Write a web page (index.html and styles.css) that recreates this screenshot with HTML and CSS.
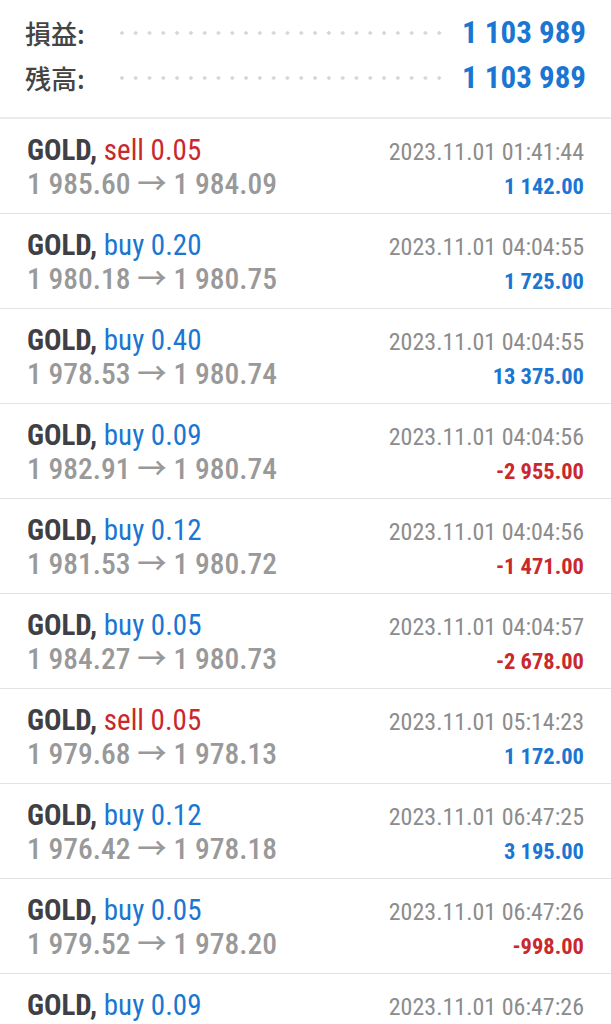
FILE: index.html
```html
<!DOCTYPE html>
<html lang="ja">

<head>
  <meta charset="UTF-8" />
  <meta name="viewport" content="width=device-width, initial-scale=1.0" />
  <title>履歴</title>
  <link rel="stylesheet" href="styles.css">
</head>

<body>
  <div class="summary">
    <div class="summary-row">
      <span class="label">損益:</span>
      <span class="dots"></span>
      <span class="value">1 103 989</span>
    </div>
    <div class="summary-row">
      <span class="label">残高:</span>
      <span class="dots"></span>
      <span class="value">1 103 989</span>
    </div>
  </div>

  <div class="deals">
    <div class="deal">
      <div class="line">
        <span class="title">GOLD, <span class="sell">sell 0.05</span></span>
        <span class="date">2023.11.01 01:41:44</span>
      </div>
      <div class="line second">
        <span class="price">1 985.60 → 1 984.09</span>
        <span class="profit">1 142.00</span>
      </div>
    </div>

    <div class="deal">
      <div class="line">
        <span class="title">GOLD, <span class="buy">buy 0.20</span></span>
        <span class="date">2023.11.01 04:04:55</span>
      </div>
      <div class="line second">
        <span class="price">1 980.18 → 1 980.75</span>
        <span class="profit">1 725.00</span>
      </div>
    </div>

    <div class="deal">
      <div class="line">
        <span class="title">GOLD, <span class="buy">buy 0.40</span></span>
        <span class="date">2023.11.01 04:04:55</span>
      </div>
      <div class="line second">
        <span class="price">1 978.53 → 1 980.74</span>
        <span class="profit">13 375.00</span>
      </div>
    </div>

    <div class="deal">
      <div class="line">
        <span class="title">GOLD, <span class="buy">buy 0.09</span></span>
        <span class="date">2023.11.01 04:04:56</span>
      </div>
      <div class="line second">
        <span class="price">1 982.91 → 1 980.74</span>
        <span class="profit loss">-2 955.00</span>
      </div>
    </div>

    <div class="deal">
      <div class="line">
        <span class="title">GOLD, <span class="buy">buy 0.12</span></span>
        <span class="date">2023.11.01 04:04:56</span>
      </div>
      <div class="line second">
        <span class="price">1 981.53 → 1 980.72</span>
        <span class="profit loss">-1 471.00</span>
      </div>
    </div>

    <div class="deal">
      <div class="line">
        <span class="title">GOLD, <span class="buy">buy 0.05</span></span>
        <span class="date">2023.11.01 04:04:57</span>
      </div>
      <div class="line second">
        <span class="price">1 984.27 → 1 980.73</span>
        <span class="profit loss">-2 678.00</span>
      </div>
    </div>

    <div class="deal">
      <div class="line">
        <span class="title">GOLD, <span class="sell">sell 0.05</span></span>
        <span class="date">2023.11.01 05:14:23</span>
      </div>
      <div class="line second">
        <span class="price">1 979.68 → 1 978.13</span>
        <span class="profit">1 172.00</span>
      </div>
    </div>

    <div class="deal">
      <div class="line">
        <span class="title">GOLD, <span class="buy">buy 0.12</span></span>
        <span class="date">2023.11.01 06:47:25</span>
      </div>
      <div class="line second">
        <span class="price">1 976.42 → 1 978.18</span>
        <span class="profit">3 195.00</span>
      </div>
    </div>

    <div class="deal">
      <div class="line">
        <span class="title">GOLD, <span class="buy">buy 0.05</span></span>
        <span class="date">2023.11.01 06:47:26</span>
      </div>
      <div class="line second">
        <span class="price">1 979.52 → 1 978.20</span>
        <span class="profit loss">-998.00</span>
      </div>
    </div>

    <div class="deal">
      <div class="line">
        <span class="title">GOLD, <span class="buy">buy 0.09</span></span>
        <span class="date">2023.11.01 06:47:26</span>
      </div>
    </div>
  </div>
</body>

</html>
```

FILE: styles.css
```css
body {
  margin: 0;
  background-color: white;
  font-family: Roboto, "Noto Sans CJK JP", sans-serif;
  font-stretch: condensed;
  overflow: hidden;
}

/* top block with totals */
.summary {
  padding: 10px 25px 17px 25px;
  border-bottom: 2px solid #ebebeb;
}

.summary-row {
  display: flex;
  align-items: center;
  height: 45px;
}

.label {
  font-family: "Noto Sans CJK JP", sans-serif;
  font-size: 26px;
  font-weight: 500;
  color: #444;
}

.dots {
  flex: 1;
  height: 4px;
  margin: 0 14px 0 30px;
  background-image: radial-gradient(circle, #d6d6d6 1.5px, transparent 2px);
  background-size: 13.8px 4px;
  background-repeat: repeat-x;
}

.value {
  font-size: 31px;
  font-weight: bold;
  color: #1a76d2;
}

/* deals list */
.deal {
  padding: 15px 27px 11px 27px;
  border-bottom: 1px solid #e2e2e2;
}

.line {
  display: flex;
  justify-content: space-between;
  align-items: baseline;
  height: 33px;
  line-height: 33px;
}

.line.second {
  height: 35px;
  line-height: 35px;
}

.title {
  font-size: 29px;
  font-weight: bold;
  color: #3f4045;
}

.sell,
.buy {
  font-weight: normal;
}

.sell {
  color: #c9282d;
}

.buy {
  color: #1a76d2;
}

.price {
  font-size: 29.5px;
  color: #999;
  font-weight: 500;
}

.date {
  font-size: 24px;
  color: #8c8c8c;
}

.profit {
  font-size: 22.5px;
  font-weight: bold;
  color: #1a76d2;
}

.profit.loss {
  color: #c9282d;
}
```
